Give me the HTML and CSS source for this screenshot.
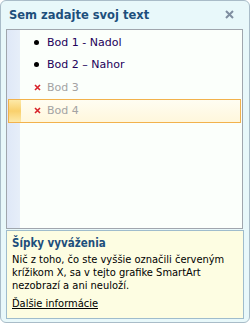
FILE: index.html
```html
<!DOCTYPE html>
<html lang="sk">
<head>
  <meta charset="UTF-8">
  <title>Sem zadajte svoj text</title>
  <link rel="stylesheet" href="styles.css">
</head>
<body>
  <div class="pane">
    <div class="pane-head">
      <span class="pane-title">Sem zadajte svoj text</span>
      <svg class="close" width="9" height="9" viewBox="0 0 9 9">
        <path d="M1 1 L8 8 M8 1 L1 8" stroke="#7f8ea0" stroke-width="2"/>
      </svg>
    </div>

    <div class="editor">
      <div class="row">
        <span class="dot"></span>
        <span class="label">Bod 1 - Nadol</span>
      </div>
      <div class="row">
        <span class="dot"></span>
        <span class="label">Bod 2 – Nahor</span>
      </div>
      <div class="row off">
        <svg class="cross" width="7" height="7" viewBox="0 0 7 7">
          <path d="M1 1 L6 6 M6 1 L1 6" stroke="#d8232a" stroke-width="1.6"/>
        </svg>
        <span class="label">Bod 3</span>
      </div>
      <div class="row off selected">
        <svg class="cross" width="7" height="7" viewBox="0 0 7 7">
          <path d="M1 1 L6 6 M6 1 L1 6" stroke="#d8232a" stroke-width="1.6"/>
        </svg>
        <span class="label">Bod 4</span>
      </div>
    </div>

    <div class="note">
      <div class="note-title">Šípky vyváženia</div>
      <p>Nič z toho, čo ste vyššie označili červeným krížikom X, sa v tejto grafike SmartArt nezobrazí a ani neuloží.</p>
      <a href="#">Ďalšie informácie</a>
    </div>
  </div>
</body>
</html>
```

FILE: styles.css
```css
/* task pane */
body {
  margin: 0;
  background: #ffffff;
  font-family: "DejaVu Sans", Verdana, sans-serif;
  font-size: 11px;
}

.pane {
  box-sizing: border-box;
  width: 250px;
  height: 323px;
  border: 1px solid #a9bcc8;
  border-radius: 6px;
  background: #e8f8fa;
  padding: 0 5px;
}

.pane-head {
  height: 29px;
  display: flex;
  align-items: center;
  justify-content: space-between;
  padding: 0 10px 0 3px;
  margin-top: -1px;
}

.pane-title {
  font-weight: bold;
  font-size: 11.5px;
  color: #1d4f7c;
}

.editor {
  box-sizing: border-box;
  height: 200px;
  margin-right: 1px;
  padding-top: 1px;
  border: 1px solid #a0a6ad;
  background: linear-gradient(to right, #dfe8f7 0, #e6eef9 13px, #fbfffb 13px);
}

.row {
  box-sizing: border-box;
  height: 22.5px;
  margin: 0 1px;
  display: flex;
  align-items: center;
  padding-left: 26px;
  color: #22005a;
}

.dot {
  width: 5px;
  height: 5px;
  border-radius: 50%;
  background: #000000;
  margin-right: 8px;
}

.cross {
  margin-right: 6px;
}

.off .label {
  color: #a3a3a3;
}

.selected {
  height: 24px;
  margin-top: 0;
  padding-left: 25px;
  border: 1px solid #f2b24c;
  background:
    linear-gradient(to bottom, #fde9a8, #f9d06c 50%, #fde9a8) left / 12px 100% no-repeat,
    linear-gradient(to bottom, #fffdf2, #fff7dc);
}

.note {
  box-sizing: border-box;
  height: 89px;
  margin-top: 1px;
  border: 1px solid #9fbccc;
  background: #fdfde2;
  padding: 5px 5px 0 5px;
  color: #000000;
  font-family: "DejaVu Sans Condensed", "DejaVu Sans", sans-serif;
}

.note-title {
  font-weight: bold;
  font-size: 11.5px;
  color: #1d4f7c;
  margin-bottom: 3px;
}

.note p {
  margin: 0 0 5px 0;
  line-height: 13px;
}

.note a {
  color: #000000;
}
```
